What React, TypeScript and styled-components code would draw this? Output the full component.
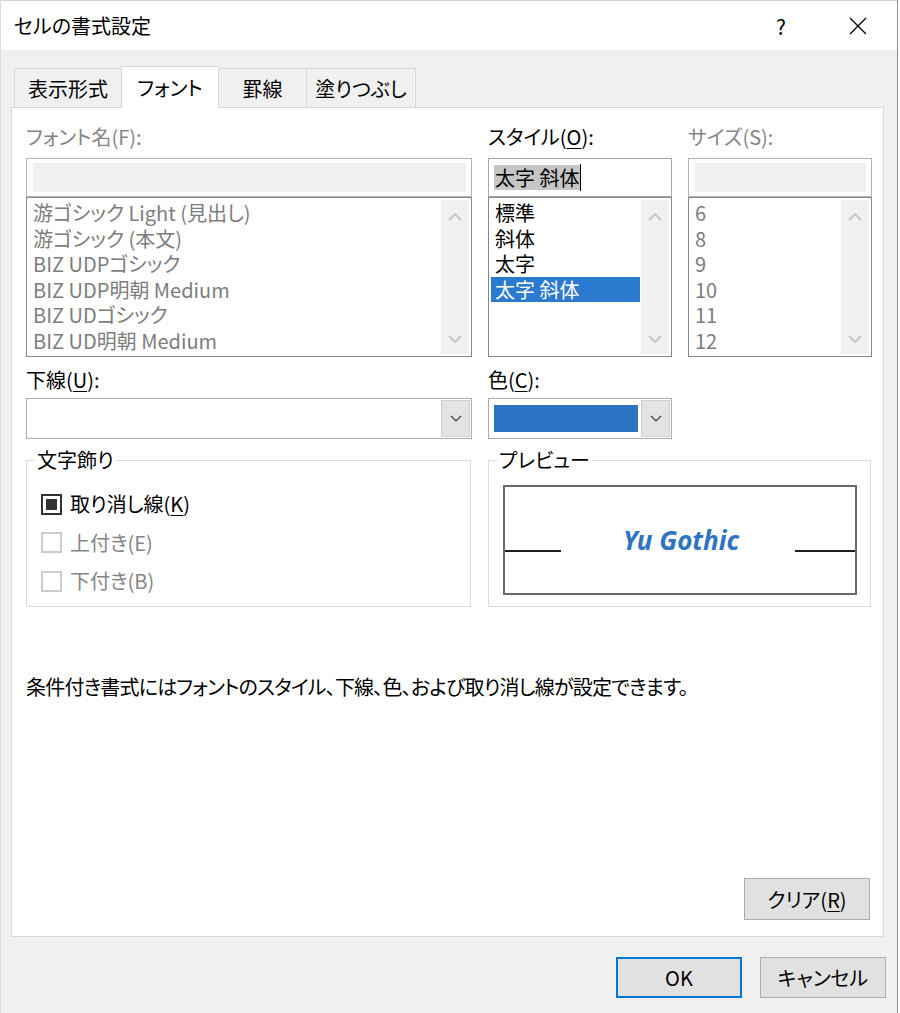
import React from 'react';
import styled, { createGlobalStyle } from 'styled-components';

const GlobalStyle = createGlobalStyle`
  html, body {
    margin: 0;
    padding: 0;
    background: #fff;
  }
  body {
    font-family: "Noto Sans CJK JP", "Noto Sans", sans-serif;
    font-feature-settings: "palt" 1;
    color: #000;
  }
  * {
    box-sizing: border-box;
  }
`;

const fontNames = [
  '游ゴシック Light (見出し)',
  '游ゴシック (本文)',
  'BIZ UDPゴシック',
  'BIZ UDP明朝 Medium',
  'BIZ UDゴシック',
  'BIZ UD明朝 Medium',
];
const styleNames = ['標準', '斜体', '太字', '太字 斜体'];
const sizes = ['6', '8', '9', '10', '11', '12'];
const tabs = [
  { label: '表示形式', width: 108 },
  { label: 'フォント', width: 98, active: true },
  { label: '罫線', width: 89 },
  { label: '塗りつぶし', width: 110 },
];

const Chevron = ({ dir }: { dir: 'up' | 'down' }) => (
  <svg width="14" height="8" viewBox="0 0 14 8">
    <polyline
      points={dir === 'up' ? '1,7 7,1 13,7' : '1,1 7,7 13,1'}
      fill="none"
      stroke="#c6c6c6"
      strokeWidth="2"
    />
  </svg>
);

const DropChevron = () => (
  <svg width="12" height="7" viewBox="0 0 12 7">
    <polyline points="1,1 6,6 11,1" fill="none" stroke="#3c3c3c" strokeWidth="1.2" />
  </svg>
);

const CloseIcon = () => (
  <svg width="18" height="18" viewBox="0 0 18 18">
    <line x1="1" y1="1" x2="17" y2="17" stroke="#000" strokeWidth="1.3" />
    <line x1="17" y1="1" x2="1" y2="17" stroke="#000" strokeWidth="1.3" />
  </svg>
);

const App: React.FC = () => {
  //render
  return (
    <>
      <GlobalStyle />
      <Window>
        <TitleBar>
          <Title>セルの書式設定</Title>
          <TitleButton>?</TitleButton>
          <TitleButton $close>
            <CloseIcon />
          </TitleButton>
        </TitleBar>

        <TabRow>
          {tabs.map((t) => (
            <Tab key={t.label} $active={t.active} $w={t.width}>
              {t.label}
            </Tab>
          ))}
        </TabRow>

        <Panel>
          <FieldGrid>
            <FieldColumn>
              <Label $disabled>フォント名(F):</Label>
              <TextBox $disabled>
                <TextFill />
              </TextBox>
              <ListBox>
                <Items>
                  {fontNames.map((n) => (
                    <Item key={n} $disabled>
                      {n}
                    </Item>
                  ))}
                </Items>
                <ScrollBar>
                  <Chevron dir="up" />
                  <Chevron dir="down" />
                </ScrollBar>
              </ListBox>
            </FieldColumn>

            <FieldColumn>
              <Label>
                スタイル(<Key>O</Key>):
              </Label>
              <TextBox>
                <Selected>太字 斜体</Selected>
                <Caret />
              </TextBox>
              <ListBox>
                <Items>
                  {styleNames.map((n, i) => (
                    <Item key={n} $selected={i === styleNames.length - 1}>
                      {n}
                    </Item>
                  ))}
                </Items>
                <ScrollBar>
                  <Chevron dir="up" />
                  <Chevron dir="down" />
                </ScrollBar>
              </ListBox>
            </FieldColumn>

            <FieldColumn>
              <Label $disabled>サイズ(S):</Label>
              <TextBox $disabled>
                <TextFill />
              </TextBox>
              <ListBox>
                <Items>
                  {sizes.map((n) => (
                    <Item key={n} $disabled>
                      {n}
                    </Item>
                  ))}
                </Items>
                <ScrollBar>
                  <Chevron dir="up" />
                  <Chevron dir="down" />
                </ScrollBar>
              </ListBox>
            </FieldColumn>
          </FieldGrid>

          <ComboGrid>
            <FieldColumn>
              <ComboLabel>
                下線(<Key>U</Key>):
              </ComboLabel>
              <Combo>
                <ComboValue />
                <ComboButton>
                  <DropChevron />
                </ComboButton>
              </Combo>
            </FieldColumn>
            <FieldColumn>
              <ComboLabel>
                色(<Key>C</Key>):
              </ComboLabel>
              <Combo>
                <ComboValue>
                  <Swatch />
                </ComboValue>
                <ComboButton>
                  <DropChevron />
                </ComboButton>
              </Combo>
            </FieldColumn>
          </ComboGrid>

          <GroupGrid>
            <Group>
              <Legend>文字飾り</Legend>
              <CheckRow>
                <CheckBox>
                  <CheckMark />
                </CheckBox>
                <CheckLabel>
                  取り消し線(<Key>K</Key>)
                </CheckLabel>
              </CheckRow>
              <CheckRow>
                <CheckBox $disabled />
                <CheckLabel $disabled>上付き(E)</CheckLabel>
              </CheckRow>
              <CheckRow>
                <CheckBox $disabled />
                <CheckLabel $disabled>下付き(B)</CheckLabel>
              </CheckRow>
            </Group>
            <Group>
              <Legend>プレビュー</Legend>
              <PreviewFrame>
                <PreviewLine $w={56} />
                <PreviewText>Yu Gothic</PreviewText>
                <PreviewLine $w={60} />
              </PreviewFrame>
            </Group>
          </GroupGrid>

          <Description>条件付き書式にはフォントのスタイル、下線、色、および取り消し線が設定できます。</Description>

          <ClearButton>
            クリア(<Key>R</Key>)
          </ClearButton>
        </Panel>

        <Footer>
          <DialogButton $default>OK</DialogButton>
          <DialogButton>キャンセル</DialogButton>
        </Footer>
      </Window>
    </>
  );
};

//styles
const Window = styled.div`
  width: 898px;
  height: 1013px;
  display: flex;
  flex-direction: column;
  background: #f0f0f0;
  border-left: 1px solid #dcdcdc;
  border-right: 1px solid #8c8c8c;
`;

const TitleBar = styled.div`
  height: 50px;
  flex-shrink: 0;
  display: flex;
  align-items: center;
  background: #fff;
  border-top: 1px solid #d4d4d4;
  padding: 0 16px 0 13px;
`;

const Title = styled.div`
  font-size: 20px;
  line-height: 26px;
  margin-right: auto;
`;

const TitleButton = styled.div<{ $close?: boolean }>`
  width: 46px;
  height: 40px;
  display: flex;
  align-items: center;
  justify-content: center;
  font-size: 21px;
  margin-left: ${(p) => (p.$close ? '31px' : '0')};
`;

const TabRow = styled.div`
  height: 57px;
  flex-shrink: 0;
  display: flex;
  align-items: flex-end;
  margin-left: 13px;
`;

const Tab = styled.div<{ $active?: boolean; $w: number }>`
  position: relative;
  width: ${(p) => p.$w}px;
  height: ${(p) => (p.$active ? 42 : 39)}px;
  margin-left: -1px;
  margin-bottom: ${(p) => (p.$active ? '-1px' : '0')};
  z-index: ${(p) => (p.$active ? 1 : 0)};
  display: flex;
  align-items: center;
  justify-content: center;
  font-size: 20px;
  background: ${(p) => (p.$active ? '#fff' : '#f0f0f0')};
  border: 1px solid #d9d9d9;
  border-bottom: none;
  &:first-child {
    margin-left: 0;
  }
`;

const Panel = styled.div`
  height: 830px;
  flex-shrink: 0;
  margin: 0 13px 0 10px;
  display: flex;
  flex-direction: column;
  background: #fff;
  border: 1px solid #d9d9d9;
  padding: 16px 11px 16px 14px;
`;

const FieldGrid = styled.div`
  display: grid;
  grid-template-columns: 446px 184px 184px;
  column-gap: 16px;
`;

const FieldColumn = styled.div`
  display: flex;
  flex-direction: column;
`;

const Label = styled.div<{ $disabled?: boolean }>`
  height: 26px;
  line-height: 26px;
  font-size: 20px;
  margin-bottom: 8px;
  color: ${(p) => (p.$disabled ? '#858585' : '#000')};
`;

const Key = styled.u`
  text-underline-offset: 3px;
  text-decoration-thickness: 1px;
`;

const TextBox = styled.div<{ $disabled?: boolean }>`
  height: 39px;
  display: flex;
  align-items: center;
  padding: ${(p) => (p.$disabled ? '4px 5px 4px 6px' : '0 5px')};
  border: 1px solid ${(p) => (p.$disabled ? '#b4b4b4' : '#a6a6a6')};
  background: #fff;
  font-size: 20px;
`;

const TextFill = styled.div`
  flex: 1;
  align-self: stretch;
  background: #f0f0f0;
`;

const Selected = styled.span`
  background: #c6c6c6;
  line-height: 25px;
  height: 25px;
  padding: 0 1px;
`;

const Caret = styled.span`
  width: 1px;
  height: 27px;
  background: #000;
`;

const ListBox = styled.div`
  height: 160px;
  display: flex;
  padding: 2px;
  border: 1px solid #828790;
  background: #fff;
`;

const Items = styled.div`
  flex: 1;
  min-width: 0;
  margin-right: 1px;
`;

const Item = styled.div<{ $disabled?: boolean; $selected?: boolean }>`
  height: 25.6px;
  line-height: 25.6px;
  padding-left: 4px;
  font-size: 20px;
  white-space: nowrap;
  color: ${(p) => (p.$selected ? '#fff' : p.$disabled ? '#7d7d7d' : '#000')};
  background: ${(p) => (p.$selected ? '#2c79d0' : 'transparent')};
`;

const ScrollBar = styled.div`
  width: 28px;
  flex-shrink: 0;
  display: flex;
  flex-direction: column;
  align-items: center;
  justify-content: space-between;
  padding: 13px 0 11px;
  background: #f0f0f0;
`;

const ComboGrid = styled.div`
  display: grid;
  grid-template-columns: 446px 184px;
  column-gap: 16px;
  margin-top: 10px;
`;

const ComboLabel = styled(Label)`
  margin-bottom: 5px;
`;

const Combo = styled.div`
  height: 41px;
  display: flex;
  padding: 1px;
  border: 1px solid #adadad;
  background: #fff;
`;

const ComboValue = styled.div`
  flex: 1;
  display: flex;
`;

const Swatch = styled.div`
  flex: 1;
  margin: 5px 3px 5px 4px;
  background: #2e74c4;
`;

const ComboButton = styled.div`
  width: 29px;
  display: flex;
  align-items: center;
  justify-content: center;
  background: #e4e4e4;
  border: 1px solid #d0d0d0;
`;

const GroupGrid = styled.div`
  display: grid;
  grid-template-columns: 445px 383px;
  column-gap: 17px;
  margin-top: 8px;
`;

const Group = styled.fieldset`
  box-sizing: border-box;
  height: 160px;
  margin: 0;
  min-width: 0;
  padding: 12px 13px 10px 14px;
  border: 1px solid #dcdcdc;
`;

const Legend = styled.legend`
  font-size: 20px;
  line-height: 26px;
  padding: 0 2px;
  margin-left: -6px;
`;

const CheckRow = styled.div`
  height: 38.5px;
  display: flex;
  align-items: center;
  gap: 8px;
`;

const CheckBox = styled.div<{ $disabled?: boolean }>`
  width: 21px;
  height: 21px;
  display: flex;
  align-items: center;
  justify-content: center;
  border: 2px solid ${(p) => (p.$disabled ? '#cccccc' : '#333')};
  background: #fff;
`;

const CheckMark = styled.div`
  width: 11px;
  height: 11px;
  background: #333;
`;

const CheckLabel = styled.span<{ $disabled?: boolean }>`
  font-size: 20px;
  line-height: 26px;
  color: ${(p) => (p.$disabled ? '#858585' : '#000')};
`;

const PreviewFrame = styled.div`
  height: 110px;
  display: flex;
  align-items: center;
  border: 2px solid #6a6a6a;
`;

const PreviewLine = styled.div<{ $w: number }>`
  width: ${(p) => p.$w}px;
  height: 2px;
  margin-top: 22px;
  background: #1e1e1e;
`;

const PreviewText = styled.div`
  flex: 1;
  text-align: center;
  padding-left: 6px;
  font-family: "Noto Sans", "Liberation Sans", sans-serif;
  font-size: 26px;
  font-weight: 700;
  font-style: italic;
  color: #2e74c4;
`;

const Description = styled.div`
  margin-top: 67px;
  font-size: 20px;
  line-height: 26px;
  letter-spacing: -0.8px;
  white-space: nowrap;
`;

const ButtonBase = styled.div`
  width: 126px;
  display: flex;
  align-items: center;
  justify-content: center;
  font-size: 20px;
  background: #e1e1e1;
`;

const ClearButton = styled(ButtonBase)`
  height: 42px;
  margin-top: auto;
  margin-right: 2px;
  align-self: flex-end;
  border: 1px solid #adadad;
`;

const Footer = styled.div`
  flex: 1;
  display: flex;
  justify-content: flex-end;
  align-items: flex-start;
  gap: 18px;
  padding: 20px 11px 0 0;
`;

const DialogButton = styled(ButtonBase)<{ $default?: boolean }>`
  height: 41px;
  border: ${(p) => (p.$default ? '2px solid #0078d7' : '1px solid #adadad')};
`;

export default App;
